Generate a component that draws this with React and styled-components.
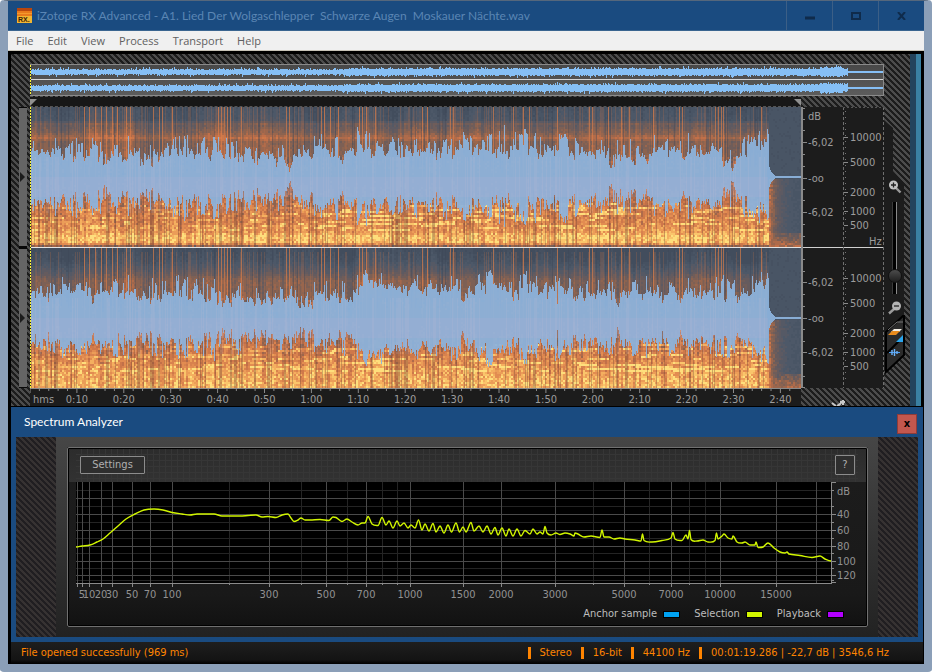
import React, { useMemo } from 'react';
import styled, { createGlobalStyle, css } from 'styled-components';

const UI_FONT = "'DejaVu Sans Condensed', 'Liberation Sans', sans-serif";

// ---------- audio data ----------

const DURATION = 164;
const PX_PER_SEC = 4.69;
const COLS = 771;
const CELLS = 386;
const ROWS = 70;
const AUDIO_END = 738;

const random = (seed) => {
    let a = seed;
    return () => {
        a = (a + 0x6d2b79f5) | 0;
        let t = Math.imul(a ^ (a >>> 15), 1 | a);
        t = (t + Math.imul(t ^ (t >>> 7), 61 | t)) ^ t;
        return ((t ^ (t >>> 14)) >>> 0) / 4294967296;
    };
};

const lerpTable = (table, x) => {
    if (x <= table[0][0]) return table[0][1];
    for (let i = 1; i < table.length; i++) {
        if (x <= table[i][0]) {
            const [x0, y0] = table[i - 1];
            const [x1, y1] = table[i];
            return y0 + ((y1 - y0) * (x - x0)) / (x1 - x0);
        }
    }
    return table[table.length - 1][1];
};

const LOUDNESS = [
    [
        [0, 25], [30, 27], [90, 25], [115, 21], [135, 22], [142, 26], [145, 31], [175, 28], [200, 22],
        [282, 20], [283, 26], [322, 26], [328, 36], [333, 29], [350, 25], [375, 25], [420, 28], [450, 30],
        [470, 28], [500, 30], [525, 30], [545, 26], [565, 22], [600, 23], [640, 27], [660, 24],
        [700, 21], [713, 22], [718, 33], [738, 31],
    ],
    [
        [0, 25], [40, 24], [85, 27], [110, 21], [142, 22], [150, 30], [175, 25], [200, 20], [240, 20],
        [282, 17], [283, 25], [320, 27], [332, 33], [370, 32], [430, 29], [450, 30], [500, 32], [550, 28],
        [565, 22], [600, 25], [640, 24], [670, 28], [700, 22], [713, 21], [720, 33], [738, 37],
    ],
];

const SPIKES = [
    [[3, 36], [65, 36], [98, 41], [145, 40], [149, 41], [157, 42], [173, 39], [174, 40], [196, 39],
        [206, 36], [284, 41], [291, 43], [327, 50], [328, 46], [335, 43], [368, 39], [437, 39], [474, 52],
        [457, 41], [510, 40], [600, 38], [637, 38], [650, 36], [658, 44], [718, 42], [721, 40], [734, 38]],
    [[20, 35], [98, 43], [122, 40], [148, 43], [157, 41], [173, 40], [210, 35], [284, 36], [312, 37],
        [327, 43], [338, 38], [387, 43], [430, 38], [457, 42], [495, 43], [506, 42], [540, 39], [568, 38],
        [616, 42], [658, 40], [722, 42], [731, 46]],
];

// drum hits that cut through the whole band
const HITS = [
    54, 59, 65, 71, 76, 82, 87, 96, 100, 123, 129, 132, 142, 188, 191, 194, 197, 200, 211, 256, 259,
    291, 294, 300, 308, 329, 332, 336, 345, 392, 397, 420, 423, 463, 483, 493, 499, 527, 559, 562, 578,
    591, 599, 623, 649, 652, 685, 688, 691, 693, 710, 731,
];

const makeEnvelope = (channel) => {
    const rnd = random(11 + channel * 37);
    const out = [];
    let drift = 0;
    let burst = 0;
    for (let x = 0; x < COLS; x++) {
        if (x > AUDIO_END) {
            const tail = Math.max(1, 14 * Math.exp(-(x - AUDIO_END) / 3));
            out.push([tail, tail]);
            continue;
        }
        drift = drift * 0.6 + (rnd() - 0.5) * 7;
        // peaks and dips last one to three columns and hit both sides together
        if (rnd() < 0.5) {
            const r = rnd();
            burst = 0;
            if (r > 0.76) burst = 4 + rnd() * 9;
            if (r < 0.22) burst = -4 - rnd() * 6;
        }
        const base = lerpTable(LOUDNESS[channel], x) + drift + burst;
        out.push([base + (rnd() - 0.5) * 4, base + (rnd() - 0.5) * 8]);
    }
    SPIKES[channel].forEach(([x, amp]) => {
        out[x] = [amp, amp - 2];
    });
    return out;
};

const COLOURS = [
    [0, [66, 77, 93]], [0.15, [76, 88, 105]], [0.35, [106, 92, 92]], [0.5, [146, 100, 78]],
    [0.65, [200, 114, 72]], [0.8, [228, 142, 82]], [0.92, [248, 184, 98]], [1, [254, 222, 124]],
];
const LEVELS = 20;

const levelColour = (level) => {
    const v = level / (LEVELS - 1);
    return `rgb(${[0, 1, 2].map((i) => Math.round(lerpTable(COLOURS.map(([p, c]) => [p, c[i]]), v))).join(',')})`;
};

const BANDS = [
    [[0, 0.1], [13, 0.15], [15, 0.38], [18, 0.34], [25, 0.44], [30, 0.58], [34, 0.44], [45, 0.46], [60, 0.56],
        [88, 0.64], [100, 0.69], [115, 0.76], [124, 0.84], [129, 0.96], [135, 0.92], [138, 0.5], [140, 0.45]],
    [[0, 0.02], [12, 0.1], [22, 0.26], [28, 0.38], [32, 0.45], [42, 0.44], [60, 0.54], [88, 0.62],
        [100, 0.68], [112, 0.77], [122, 0.85], [134, 0.9], [138, 0.9], [140, 0.6]],
];

const makeSpectrogram = (channel, envelope) => {
    const rnd = random(501 + channel * 91);
    const rows = Array.from({ length: LEVELS }, () => []);
    let haze = 0;
    const notes = Array.from({ length: 6 }, () => ({ y: 0, left: 0, gain: 0 }));
    for (let i = 0; i < CELLS; i++) {
        const x = i * 2;
        haze = haze * 0.9 + (rnd() - 0.5) * 0.08;
        const pulse = rnd() < 0.25 ? -0.1 : 0.02;
        const amp = envelope[Math.min(x, COLS - 1)];
        notes.forEach((note) => {
            note.left -= 1;
            if (note.left < 0) {
                note.y = 96 + Math.floor(rnd() * 14) * 2;
                note.left = 2 + Math.floor(rnd() * (x > 325 && x < 420 ? 14 : 7));
                note.gain = rnd() > 0.4 ? (x > 283 ? 0.22 : 0.15) : 0;
            }
        });
        for (let r = 0; r < ROWS; r++) {
            const y = r * 2;
            if (y > 72 - amp[0] + 16 && y < 68 + amp[1] - 16) continue;
            let v = lerpTable(BANDS[channel], y);
            if (x <= AUDIO_END) {
                if (y < 50) v += haze + pulse * 0.6 + (rnd() - 0.5) * 0.08;
                else v += pulse + (rnd() - 0.5) * 0.22;
                const note = notes.find((n) => n.y === y);
                if (note) v += note.gain;
            } else {
                const fade = Math.exp(-(x - AUDIO_END) / 9);
                v = 0.1 + (rnd() - 0.5) * 0.06 + (y > 70 ? fade * (0.5 + rnd() * 0.25) : 0);
                if (y > 124) v = Math.max(v, 0.3 + (y - 124) * 0.02 + (rnd() - 0.5) * 0.2);
            }
            const level = Math.max(0, Math.min(LEVELS - 1, Math.round(v * (LEVELS - 1))));
            rows[level].push(`M${i} ${r}h1v1h-1z`);
        }
    }
    return rows.map((cells) => cells.join(''));
};

const envelopePath = (envelope, centre) => {
    const top = envelope.map(([up], x) => `${x} ${(centre - up).toFixed(1)}H${x + 1}`);
    const bottom = envelope.map(([, down], x) => `${x + 1} ${(centre + down).toFixed(1)}H${x}`).reverse();
    return `M${top.join('L')}L${bottom.join('L')}Z`;
};

const makeStreaks = (channel) => {
    const rnd = random(77);
    const dark = [];
    const light = [];
    const shade = [];
    for (let x = 0; x < AUDIO_END; x++) {
        const r = rnd();
        if (r < 0.24) dark.push(`M${x} 84h1v56h-1z`);
        if (r > 0.8) light.push(`M${x} ${channel ? 4 : 0}h1v66h-1z`);
        if (r > 0.6 && r < 0.68) shade.push(`M${x} 0h1v60h-1z`);
    }
    return {
        dark: dark.join(''),
        light: light.join(''),
        shade: shade.join(''),
        hits: HITS.map((x) => `M${x} 0h1v70h-1z`).join(''),
    };
};

const Channel = ({ channel }) => {
    const { wave, levels, streaks } = useMemo(() => {
        const envelope = makeEnvelope(channel);
        return {
            wave: envelopePath(envelope, 70),
            levels: makeSpectrogram(channel, envelope),
            streaks: makeStreaks(channel),
        };
    }, [channel]);
    return (
        <ChannelView>
            <Plot viewBox="0 0 386 70" preserveAspectRatio="none" shapeRendering="crispEdges">
                <rect width="386" height="70" fill="#94654e" />
                <rect x="369" width="17" height="70" fill="#4a5769" />
                {levels.map((d, i) => d && <path key={i} d={d} fill={levelColour(i)} />)}
            </Plot>
            <Plot viewBox="0 0 771 140" preserveAspectRatio="none" shapeRendering="crispEdges">
                <path d={streaks.shade} fill="#3c4656" opacity="0.35" />
                <path d={streaks.light} fill="#cf7444" opacity="0.22" />
                <path d={streaks.hits} fill="#e07f48" opacity="0.65" />
                <path d={streaks.dark} fill="#6d4534" opacity="0.34" />
                <path d={wave} fill="#8cb3dc" opacity="0.94" />
                <path d="M0 70H738V90H0z" fill="#b9b4d2" opacity="0.18" />
                <path d={streaks.dark} transform="translate(1 -34)" fill="#c4bcd2" opacity="0.14" />
            </Plot>
        </ChannelView>
    );
};

const OverviewWave = () => {
    const lines = useMemo(() => [0, 1].map((channel) => {
        const rnd = random(900 + channel);
        const env = Array.from({ length: 854 }, (_, x) => {
            if (x > 818) return [1, 0.5];
            const base = x < 314 ? 2 : 2.8;
            const swell = x > 790 && x < 814 ? 1.2 : 0;
            const peak = () => (rnd() > 0.8 ? rnd() * 3 : rnd() * 1.4);
            return [base + swell + peak(), base + swell + peak()];
        });
        return envelopePath(env, channel ? 23 : 7);
    }), []);
    return (
        <Plot viewBox="0 0 854 30" preserveAspectRatio="none" shapeRendering="crispEdges">
            {lines.map((d, i) => <path key={i} d={d} fill="#86bff5" />)}
            <path d="M0 14.5H854" stroke="#d6d6d6" />
        </Plot>
    );
};

// ---------- scales ----------

const DB_LABELS = [[9, 'dB'], [35, '-6,02'], [71, '-oo'], [105, '-6,02'], [175, '-6,02'], [211, '-oo'], [245, '-6,02']];
const HZ_LABELS = [
    [30, '10000'], [55, '5000'], [85, '2000'], [104, '1000'], [118, '500'],
    [171, '10000'], [196, '5000'], [226, '2000'], [245, '1000'], [259, '500'],
];
const TIMES = Array.from({ length: 16 }, (_, i) => (i + 1) * 10);

const clock = (s) => `${Math.floor(s / 60)}:${String(s % 60).padStart(2, '0')}`;

const DbScale = () => (
    <ScaleSvg>
        <path d="M1 0V281" stroke="#8a8a8a" strokeWidth="2" />
        {[1, 12, 23, 47, 59, 82, 93, 117, 129, 152, 164, 187, 199, 222, 234, 257, 269, 280].map((y) => (
            <path key={y} d={`M2 ${y}.5h2`} stroke="#8a8a8a" />
        ))}
        {DB_LABELS.map(([y, text]) => (
            <g key={y}>
                {text !== 'dB' && <path d={`M2 ${y}.5h4`} stroke="#8a8a8a" />}
                <text x="7" y={y + 4}>{text}</text>
            </g>
        ))}
    </ScaleSvg>
);

const HzScale = () => (
    <ScaleSvg>
        <path d="M0.5 0V281M40.5 0V281" stroke="#6f6f6f" strokeDasharray="3 2" />
        <path d="M0 0.5H41" stroke="#555" strokeDasharray="2 2" />
        {[4, 145].map((y) => (
            <path key={y} d={`M2.5 ${y}V${y + 130}`} stroke="#777" strokeDasharray="1 5" />
        ))}
        {HZ_LABELS.map(([y, text]) => (
            <g key={y}>
                <path d={`M1 ${y}.5h4`} stroke="#8a8a8a" />
                <text x="7" y={y + 4}>{text}</text>
            </g>
        ))}
        <text x="26" y="138">Hz</text>
    </ScaleSvg>
);

const TimeRuler = () => {
    const at = (s) => `${((s * PX_PER_SEC) / COLS) * 100}%`;
    return (
        <ScaleSvg>
            <line x1="0" x2="100%" y1="0.5" y2="0.5" stroke="#8a8a8a" />
            {Array.from({ length: DURATION / 2 }, (_, i) => i * 2).map((s) => (
                <line key={s} x1={at(s)} x2={at(s)} y1="1" y2={s % 10 ? 3 : 5} stroke="#8a8a8a" />
            ))}
            <text x="3" y="15">hms</text>
            {TIMES.map((s) => (
                <text key={s} x={at(s)} y="15" textAnchor="middle">{clock(s)}</text>
            ))}
        </ScaleSvg>
    );
};

// ---------- spectrum analyzer ----------

const CHART_W = 755;
const FREQS = [
    [6, '5'], [13, '10'], [25, '20'], [36, '30'], [56, '50'], [74, '70'], [96, '100'], [193, '300'],
    [250, '500'], [290, '700'], [334, '1000'], [387, '1500'], [425, '2000'], [479, '3000'], [548, '5000'],
    [595, '7000'], [644, '10000'], [700, '15000'],
];
const MINOR_FREQS = [153, 225, 271, 306, 321, 518, 573, 613, 629];
const LEVEL_LINES = [16, 32, 48, 64, 79, 93];
const MINOR_LEVELS = [8, 24, 40, 56, 71, 86, 98];
const LEVEL_LABELS = [[9, 'dB'], [32, '40'], [48, '60'], [64, '80'], [79, '100'], [93, '120']];

const CURVE = `0,65 6,64 14,63 21,60 27,57 34,51 42,44 50,37 59,32 68,28 78,27 87,28 96,30.5 106,32 114,33
121,32 138,32 146,34 154,34 164,34 172,33.5 180,33 186,35 192,34.5 200,35.5 206,33 212,32 215,36 218,39.5
222,38 225,36 229,38 234,38 244,37.5 253,38.5 257,35 260,35.5 266,39.5 271,37 276,40 282,43 286,41 289,41
292,34.5 296,42 302,43.5 306,35.5 310,43 313,39 317,46 321,39 324,44 328,41 332,46 335,43 339,46 342.5,38
346,48 349,42 353,49 357,41.5 360,50 364,44 368,51 372,43 375.5,50 380,41 383.5,50 387,45 390,50 395,40.5
398,49 403,44 407,50 411,44 415,52 419,45.5 422,53 426,46 430,54 433,47 437,54 441,47 445,54 449,48.5
454,52 457,47 461,52 464,50 467,52 469,44.5 471,51 475,53 480,51 484,52.5 489,51 494,52 498,54 499,51 502,52
508,55 515,54 524,55.5 526,48 528,55 533,55 538,57 544,56 549,57 559,58 565,59 566.5,52 568,58.5 576,60
586,58.5 595,56 597,50.5 599,57 606,58.5 610,53 612,57 613.5,48.5 615,57.5 621,59 627,58 632,60 639,58.5
640.5,51 642,57 646,54 648,52 652,56 656,57 657,54 661,60 666,61 669,60 674,63 679,63 680,60 682,65.5
687,65 692,61 698,66 704,70 709,71 711,70 713,72 724,73.5 736,75.5 744,74 749,77 755,79`;

// flat tangents at peaks, averaged ones on slopes
const smoothPath = (text) => {
    const pts = text.split(/\s+/).map((p) => p.split(',').map(Number));
    const slope = pts.map(([, y], i) => {
        const a = pts[i - 1];
        const b = pts[i + 1];
        if (!a || !b || (y - a[1]) * (b[1] - y) <= 0) return 0;
        return (b[1] - a[1]) / (b[0] - a[0]);
    });
    return pts.slice(1).reduce((d, [x, y], i) => {
        const [px, py] = pts[i];
        const h = (x - px) / 3;
        const nums = [px + h, py + slope[i] * h, x - h, y - slope[i + 1] * h, x, y];
        return `${d}C${nums.map((n) => n.toFixed(2)).join(' ')}`;
    }, `M${pts[0]}`);
};

const pct = (x) => `${(x / CHART_W) * 100}%`;

const SpectrumChart = () => (
    <ChartGrid>
        <ChartArea>
            <rect width="100%" height="101" fill="#000" />
            <g stroke="#242424" shapeRendering="crispEdges">
                {MINOR_FREQS.map((x) => <line key={x} x1={pct(x)} x2={pct(x)} y1="0" y2="101" />)}
                {MINOR_LEVELS.map((y) => <line key={y} x1="0" x2="100%" y1={y + 0.5} y2={y + 0.5} />)}
            </g>
            <g stroke="#4a4a4a" shapeRendering="crispEdges">
                {[[1], ...FREQS, [740]].map(([x]) => <line key={x} x1={pct(x)} x2={pct(x)} y1="0" y2="101" />)}
                {LEVEL_LINES.map((y) => <line key={y} x1="0" x2="100%" y1={y + 0.5} y2={y + 0.5} />)}
            </g>
            <g stroke="#8a8a8a" shapeRendering="crispEdges">
                <line x1="0" x2="100%" y1="101.5" y2="101.5" />
                {[[1], ...FREQS].map(([x]) => <line key={x} x1={pct(x)} x2={pct(x)} y1="101" y2="105" />)}
                {MINOR_FREQS.map((x) => <line key={x} x1={pct(x)} x2={pct(x)} y1="101" y2="103" />)}
            </g>
            {FREQS.map(([x, text]) => (
                <text key={x} x={pct(x)} y="116" textAnchor="middle">{text}</text>
            ))}
            <svg width="100%" height="101" viewBox="0 0 755 101" preserveAspectRatio="none">
                <path d={smoothPath(CURVE)} fill="none" stroke="#d2f600" strokeWidth="1.4" vectorEffect="non-scaling-stroke" />
            </svg>
        </ChartArea>
        <LevelScale>
            <path d="M0.5 0V102M0 0.5H5M0 100.5H5" stroke="#8a8a8a" />
            {LEVEL_LABELS.map(([y, text]) => (
                <g key={y}>
                    {text !== 'dB' && <path d={`M0 ${y}.5h5`} stroke="#8a8a8a" />}
                    <text x="6" y={y + 4}>{text}</text>
                </g>
            ))}
            {MINOR_LEVELS.map((y) => <path key={y} d={`M0 ${y}.5h3`} stroke="#8a8a8a" />)}
        </LevelScale>
    </ChartGrid>
);

// ---------- icons ----------

const Logo = () => (
    <svg width="15" height="15" viewBox="0 0 15 15" aria-hidden="true">
        <rect width="15" height="15" fill="#e87a1c" />
        <rect width="15" height="3" fill="#b8460e" />
        <path d="M0 5.5H15" stroke="#f49a2c" />
        <rect y="8" width="15" height="7" fill="#f2b632" />
        <text x="1" y="14" fontFamily="Liberation Sans" fontSize="7" fontWeight="bold" fill="#3a2206">RX.</text>
    </svg>
);

const Magnifier = ({ plus }) => (
    <svg width="14" height="14" viewBox="0 0 14 14" aria-hidden="true">
        {plus ? (
            <>
                <path d="M8 8L12.5 12.5" stroke="#9a9a9a" strokeWidth="2.4" />
                <circle cx="5.5" cy="5" r="4.5" fill="#c4c4c4" />
                <path d="M3 5H8M5.5 2.5V7.5" stroke="#222" strokeWidth="1.3" />
            </>
        ) : (
            <>
                <path d="M6 8L1 12.5" stroke="#9a9a9a" strokeWidth="2.4" />
                <circle cx="8.5" cy="5" r="4.5" fill="#b4b4b4" />
                <path d="M6 5H11" stroke="#222" strokeWidth="1.3" />
            </>
        )}
    </svg>
);

const ViewBlend = () => (
    <svg width="20" height="60" viewBox="0 0 20 60" aria-hidden="true">
        <path d="M19 0V40L1 57V17Z" fill="#2b2b2b" stroke="#000" strokeWidth="2" />
        <path d="M3 15L12 7H18" fill="none" stroke="#777" />
        <path d="M2 38L18 22" stroke="#000" strokeWidth="2" />
        <path d="M9 14H17L14 17H6Z" fill="#f5f0e6" />
        <path d="M7 16H15L11 20H3Z" fill="#e88b1d" />
        <path d="M11 27L18 20V27Z" fill="#2aa5ee" />
        <path d="M4 37.5H15" stroke="#4b9cf0" />
        <path d="M7 35V40M9.5 34V41M12 36V39" stroke="#6ab4ff" strokeWidth="1.4" />
    </svg>
);

const CornerArrows = () => (
    <svg width="16" height="6" viewBox="0 0 16 6" aria-hidden="true">
        <path d="M1 3L5 6M6 6C9 5 10 4 11 1M12 0V5" fill="none" stroke="#c8c8c8" strokeWidth="2" />
        <rect x="9" y="1" width="5" height="2" fill="#c8c8c8" />
    </svg>
);

// ---------- app ----------

const MENU = ['File', 'Edit', 'View', 'Process', 'Transport', 'Help'];
const LEGEND = [
    ['Anchor sample', '#00a2f2'],
    ['Selection', '#d2f600'],
    ['Playback', '#b300ff'],
];

const App = () => (
    <Window>
        <GlobalStyle />
        <TitleBar>
            <Logo />
            <Title>{'iZotope RX Advanced - A1. Lied Der Wolgaschlepper\u00a0 Schwarze Augen\u00a0 Moskauer Nächte.wav'}</Title>
            <WindowButton aria-label="Minimize">
                <svg width="10" height="11" viewBox="0 0 10 11"><path d="M0 8H10" stroke="currentColor" strokeWidth="3" /></svg>
            </WindowButton>
            <WindowButton aria-label="Maximize">
                <svg width="10" height="8" viewBox="0 0 10 8"><path d="M1 1H9V7H1Z" fill="none" stroke="currentColor" strokeWidth="2" /></svg>
            </WindowButton>
            <WindowButton aria-label="Close">
                <svg width="9" height="8" viewBox="0 0 9 8"><path d="M1 0L8 8M8 0L1 8" stroke="currentColor" strokeWidth="2" /></svg>
            </WindowButton>
        </TitleBar>
        <MenuBar>
            {MENU.map((item) => <MenuItem key={item}>{item}</MenuItem>)}
        </MenuBar>
        <Main>
            <EditorRow>
                <Editor>
                    <Overview>
                        <OverviewWave />
                        <Playhead />
                    </Overview>
                    <MarkerBar>
                        <Marker />
                        <Marker $end />
                    </MarkerBar>
                    <Selectors>
                        <SelectorButton aria-label="Select left channel" />
                        <SelectorButton aria-label="Select right channel" />
                    </Selectors>
                    <Channels>
                        <Channel channel={0} />
                        <Channel channel={1} />
                        <Playhead />
                    </Channels>
                    <ScaleCell $col={3}><DbScale /></ScaleCell>
                    <ScaleCell $col={4}><HzScale /></ScaleCell>
                    <Tools>
                        <IconButton aria-label="Zoom in"><Magnifier plus /></IconButton>
                        <ZoomSlider type="range" aria-label="Vertical zoom" min="0" max="100" defaultValue="14" />
                        <IconButton aria-label="Zoom out"><Magnifier /></IconButton>
                        <IconButton aria-label="Waveform and spectrogram balance"><ViewBlend /></IconButton>
                    </Tools>
                    <Ruler><TimeRuler /></Ruler>
                    <CornerCell><CornerArrows /></CornerCell>
                </Editor>
                <EdgeStrip />
            </EditorRow>
            <Analyzer>
                <AnalyzerTitle>
                    <span>Spectrum Analyzer</span>
                    <CloseButton aria-label="Close analyzer">x</CloseButton>
                </AnalyzerTitle>
                <AnalyzerBody>
                    <DarkHatch />
                    <Bezel>
                        <Screen>
                            <ScreenTop>
                                <SettingsButton>Settings</SettingsButton>
                                <HelpButton>?</HelpButton>
                            </ScreenTop>
                            <SpectrumChart />
                            <Legend>
                                {LEGEND.map(([name, colour]) => (
                                    <LegendItem key={name}>{name}<Swatch $colour={colour} /></LegendItem>
                                ))}
                            </Legend>
                        </Screen>
                    </Bezel>
                    <DarkHatch />
                </AnalyzerBody>
            </Analyzer>
            <StatusBar>
                <StatusText>File opened successfully (969 ms)</StatusText>
                <StatusItem>Stereo</StatusItem>
                <StatusItem>16-bit</StatusItem>
                <StatusItem>44100 Hz</StatusItem>
                <StatusItem>00:01:19.286 | -22,7 dB | 3546,6 Hz</StatusItem>
            </StatusBar>
        </Main>
    </Window>
);

// ---------- styles ----------

const GlobalStyle = createGlobalStyle`
    * {
        box-sizing: border-box;
    }
    body {
        margin: 0;
        background: #fff;
        font: 11px/14px ${UI_FONT};
    }
    button {
        margin: 0;
        padding: 0;
        border: 0;
        background: none;
        font: inherit;
        color: inherit;
    }
    svg {
        display: block;
    }
`;

const hatch = css`
    background-color: #1b1b1b;
    background-image: linear-gradient(45deg, #1c1c1c 25%, #4c4c4c 25%, #4c4c4c 50%, #1c1c1c 50%, #1c1c1c 75%, #4c4c4c 75%);
    background-size: 6px 6px;
`;

const Window = styled.div`
    display: flex;
    flex-direction: column;
    min-height: 100vh;
    border: 8px solid #8b9fb8;
    border-top: 1px solid #55677c;
    border-radius: 4px;
    background: #000;
`;

const TitleBar = styled.header`
    display: flex;
    align-items: center;
    height: 30px;
    padding-left: 9px;
    background: #1a4b80;
    border-bottom: 1px solid #3a6590;
`;

const Title = styled.h1`
    flex: 1;
    margin: 0 0 0 5px;
    font: 12px/16px Lato, 'Open Sans', sans-serif;
    color: #5a86b4;
    white-space: nowrap;
`;

const WindowButton = styled.button`
    display: flex;
    align-items: center;
    justify-content: center;
    width: 46px;
    height: 29px;
    border-left: 1px solid #3c5f86;
    color: #0f2b4b;
`;

const MenuBar = styled.nav`
    display: flex;
    gap: 14px;
    height: 20px;
    padding-left: 8px;
    background: #f0f0f0;
    border-bottom: 1px solid #c8c4b8;
    font: 11px/19px 'Open Sans', sans-serif;
    color: #606060;
`;

const MenuItem = styled.button`
    font: inherit;
`;

const Main = styled.main`
    display: flex;
    flex: 1;
    flex-direction: column;
    padding: 3px 1px 0 3px;
    background: #000;
`;

const EditorRow = styled.div`
    display: grid;
    grid-template-columns: 1fr 11px;
    padding-right: 2px;
`;

const EdgeStrip = styled.div`
    border-left: 6px solid #23435c;
    background: #3a80a2;
`;

const Editor = styled.section`
    display: grid;
    grid-template-columns: 11px 1fr 42px 41px 26px;
    grid-template-rows: 32px 11px 281px 18px;
    padding: 10px 0 0 8px;
    ${hatch}
`;

const Plot = styled.svg`
    grid-area: 1 / 1;
    width: 100%;
    height: 100%;
`;

const Playhead = styled.div`
    position: absolute;
    top: 0;
    bottom: 0;
    left: 0;
    width: 1px;
    background: repeating-linear-gradient(#f8f23a 0 2px, #222 2px 3px);
`;

const Overview = styled.div`
    position: relative;
    grid-column: 2 / 5;
    grid-row: 1;
    display: grid;
    grid-template-rows: 30px;
    border: 1px solid #8a8a8a;
    border-left: 0;
    background: linear-gradient(#484848, #5c5c5c);
`;

const MarkerBar = styled.div`
    grid-column: 2;
    grid-row: 2;
    display: flex;
    justify-content: space-between;
    padding-top: 2px;
    border-top: 1px dashed #555;
    border-bottom: 1px dashed #555;
    background: #171717;
`;

const Marker = styled.i`
    width: 7px;
    height: 7px;
    background: #909090;
    clip-path: ${({ $end }) => ($end ? 'polygon(0 0, 100% 0, 100% 100%)' : 'polygon(0 0, 100% 0, 0 100%)')};
`;

const Selectors = styled.div`
    grid-column: 1;
    grid-row: 3;
    display: grid;
    grid-template-rows: 1fr 1fr;
    gap: 3px;
    width: 8px;
    padding: 1px 0;
    background: #080808;
`;

const SelectorButton = styled.button`
    display: flex;
    align-items: center;
    padding-left: 1px;
    background: #656565;
    &::before {
        content: '';
        border: 5px solid transparent;
        border-left-color: #1c1c1c;
        border-right: 0;
    }
`;

const Channels = styled.div`
    position: relative;
    grid-column: 2;
    grid-row: 3;
    display: grid;
    grid-template-rows: 140px 140px;
    gap: 1px;
    background: #e4e4e4;
`;

const ChannelView = styled.div`
    display: grid;
    grid-template-rows: 140px;
    overflow: hidden;
`;

const ScaleCell = styled.div`
    grid-column: ${({ $col }) => $col};
    grid-row: 3;
    background: linear-gradient(#1c1c1c 140px, #d0d0d0 140px 141px, #1c1c1c 141px);
`;

const ScaleSvg = styled.svg`
    width: 100%;
    height: 100%;
    fill: #9c9c9c;
    font: 11px ${UI_FONT};
`;

const Tools = styled.div`
    position: relative;
    grid-column: 5;
    grid-row: 3;
    display: flex;
    flex-direction: column;
    align-items: center;
    padding: 73px 5px 0 0;
    isolation: isolate;
    &::before {
        content: '';
        position: absolute;
        inset: 0;
        z-index: -1;
        background: #1c1c1c;
        clip-path: polygon(0 13px, 9px 21px, 9px 64px, 20px 76px, 20px 246px, 2px 264px, 0 264px);
    }
`;

const IconButton = styled.button`
    flex: none;
`;

const ZoomSlider = styled.input`
    appearance: none;
    writing-mode: vertical-lr;
    direction: rtl;
    width: 16px;
    height: 92px;
    margin: 8px 0 7px;
    background: none;
    &::-webkit-slider-runnable-track {
        width: 5px;
        height: 92px;
        margin: 0 auto;
        border-right: 1px solid #8a8a8a;
        border-left: 1px solid #3a3a3a;
        background: #000;
    }
    &::-webkit-slider-thumb {
        appearance: none;
        width: 14px;
        height: 14px;
        margin-left: -5px;
        border: 1px solid #111;
        border-radius: 50%;
        background: linear-gradient(#4c4c4c, #1e1e1e);
    }
`;

const Ruler = styled.div`
    grid-column: 2;
    grid-row: 4;
    height: 18px;
    background: #1c1c1c;
`;

const CornerCell = styled.div`
    grid-column: 3 / 6;
    grid-row: 4;
    align-self: end;
    padding-left: 30px;
`;

const Analyzer = styled.section`
    margin-top: 1px;
    padding: 0 5px 5px;
    background: #1a4b80;
`;

const AnalyzerTitle = styled.div`
    display: flex;
    align-items: center;
    justify-content: space-between;
    height: 30px;
    padding: 0 1px 0 8px;
    font: 12px/16px Lato, 'Open Sans', sans-serif;
    color: #fff;
`;

const CloseButton = styled.button`
    width: 20px;
    height: 20px;
    margin-top: 3px;
    border: 1px solid #8e3c3a;
    background: #c2574e;
    color: #000;
    font: bold 11px/16px ${UI_FONT};
`;

const AnalyzerBody = styled.div`
    display: grid;
    grid-template-columns: 40px 1fr 40px;
    height: 200px;
`;

const DarkHatch = styled.div`
    background: #2c2929 linear-gradient(45deg, #201e21 25%, #363232 25%, #363232 50%, #201e21 50%, #201e21 75%, #363232 75%);
    background-size: 6px 6px;
`;

const Bezel = styled.div`
    display: grid;
    padding: 10px 10px 10px 11px;
    background: linear-gradient(#464646, #222);
`;

const Screen = styled.div`
    display: flex;
    flex-direction: column;
    border: 2px solid #000;
    border-radius: 2px;
    outline: 1px solid #707070;
    outline-offset: -1px;
    padding: 0 8px 0 7px;
    background: linear-gradient(#2c2c2c, #323232 33px, #1c1c1c 33px, #191919 145px, #121212);
`;

const ScreenTop = styled.div`
    display: flex;
    align-items: center;
    justify-content: space-between;
    height: 33px;
    padding: 0 3px 1px 4px;
    background:
        repeating-linear-gradient(90deg, transparent 0 5px, #363636 5px 6px),
        repeating-linear-gradient(transparent 0 5px, #363636 5px 6px);
`;

const PanelButton = styled.button`
    border: 1px solid #8c8c8c;
    border-radius: 1px;
    background: #2e2e2e;
    color: #b0b0b0;
`;

const SettingsButton = styled(PanelButton)`
    width: 65px;
    height: 18px;
`;

const HelpButton = styled(PanelButton)`
    width: 20px;
    height: 20px;
`;

const ChartGrid = styled.div`
    display: grid;
    grid-template-columns: 1fr 27px;
    height: 122px;
`;

const ChartArea = styled.svg`
    width: 100%;
    height: 122px;
    fill: #929292;
    font: 11px ${UI_FONT};
`;

const LevelScale = styled(ChartArea)``;

const Legend = styled.ul`
    display: flex;
    justify-content: flex-end;
    gap: 15px;
    margin: 3px 0 0;
    padding: 0 15px 0 0;
    list-style: none;
    color: #bdbdbd;
`;

const LegendItem = styled.li`
    display: flex;
    align-items: center;
    gap: 7px;
`;

const Swatch = styled.i`
    width: 15px;
    height: 5px;
    background: ${({ $colour }) => $colour};
    outline: 1px solid #000;
`;

const StatusBar = styled.footer`
    display: flex;
    align-items: center;
    flex: 1;
    min-height: 20px;
    padding: 0 34px 0 10px;
    background: linear-gradient(#1e1e1e, #141414 80%, #000);
    color: #ff8400;
`;

const StatusText = styled.span`
    flex: 1;
`;

const StatusItem = styled.span`
    margin-left: 9px;
    padding-left: 9px;
    border-left: 3px solid #ff8400;
    line-height: 12px;
`;

export default App;
